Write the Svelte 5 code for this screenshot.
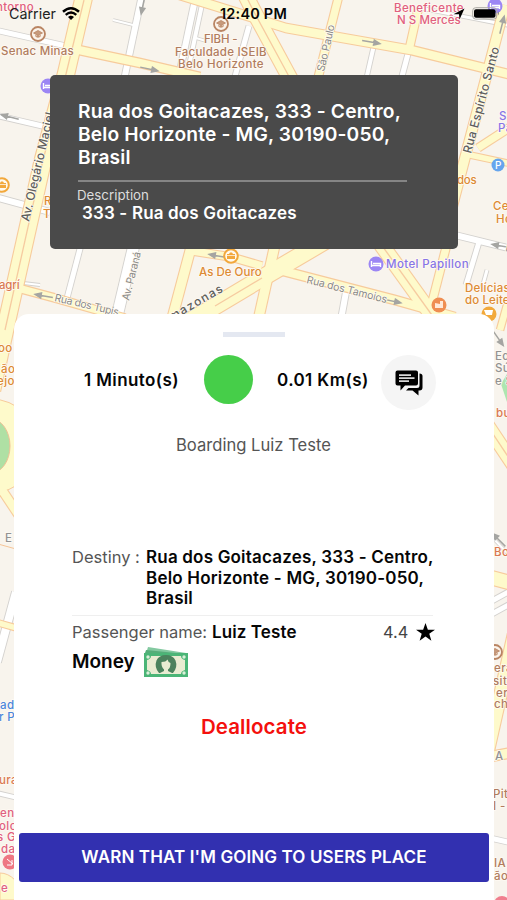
<script>
  const yellowRoads = [
    { d: 'M86 -12L66 74L43 160L5 330L-8 390', w: 17 },
    { d: 'M74 49L140 63L200 77', w: 9 },
    { d: 'M170 -8L254 18L286 28L411 50L520 77', w: 9 },
    { d: 'M240 -16L253 10L292 82', w: 15 },
    { d: 'M339 -5L317 82', w: 8 },
    { d: 'M418 10L409 50', w: 8 },
    { d: 'M505 5L467 150L450 215', w: 10 },
    { d: 'M478 148L512 126', w: 8 },
    { d: 'M470 155L512 164', w: 6 },
    { d: 'M14 287L55 298L125 318', w: 8 },
    { d: 'M193 240L169 330', w: 10 },
    { d: 'M186 250L231 257L262 266', w: 8 },
    { d: 'M165 336L262 278L330 238', w: 17 },
    { d: 'M276 240L256 330', w: 10 },
    { d: 'M268 267L395 300L455 317', w: 9 },
    { d: 'M378 240L434 318', w: 15 },
    { d: 'M448 240L428 318', w: 8 },
    { d: 'M507 305L500 330', w: 7 },
    { d: 'M-6 478L22 520', w: 9 },
    { d: 'M2 487L20 465', w: 7 },
    { d: 'M-5 622L20 629', w: 6 },
    { d: 'M485 422L515 467', w: 14 },
    { d: 'M485 576L515 584', w: 14 },
    { d: 'M515 630L488 750', w: 13 },
    { d: 'M488 757L515 752', w: 10 }
  ];
  const whiteRoads = [
    { d: 'M-5 30L75 48', w: 5 },
    { d: 'M142 -5L124 80', w: 6 },
    { d: 'M196 -5L178 80', w: 6 },
    { d: 'M204 -5L186 80', w: 4 },
    { d: 'M113 20L137 26', w: 2 },
    { d: 'M-5 115L55 129', w: 5 },
    { d: 'M249 26L234 80', w: 5 },
    { d: 'M374 45L366 80', w: 4 },
    { d: 'M409 50L401 80', w: 5 },
    { d: 'M196 38L206 41', w: 2 },
    { d: 'M420 8L512 26', w: 3 },
    { d: 'M-5 197L50 212', w: 6 },
    { d: 'M81 245L66 302', w: 5 },
    { d: 'M134 245L115 325', w: 11 },
    { d: 'M15 282L40 285', w: 2 },
    { d: 'M346 292L340 325', w: 6 },
    { d: 'M455 235L512 249', w: 6 },
    { d: 'M479 242L466 285', w: 5 },
    { d: 'M487 270L482 288', w: 3 },
    { d: 'M16 592L-3 662', w: 8 },
    { d: 'M-3 793L18 798', w: 4 },
    { d: 'M490 602L512 590', w: 5 },
    { d: 'M490 615L512 603', w: 5 },
    { d: 'M490 838L512 843', w: 5 },
    { d: 'M490 535L512 558', w: 2 }
  ];
  const medians = [
    'M84 0L66 74L43 160L5 330',
    'M240 -16L253 10L292 82',
    'M378 240L434 318',
    'M262 278L215 306',
    'M485 422L515 467'
  ];
  const arrows = [
    { x: 149, y: 69, r: 12 },
    { x: 371, y: 42, r: 10 },
    { x: 143, y: 5, r: 102 },
    { x: 10, y: 117, r: 194 },
    { x: 44, y: 296, r: 190 },
    { x: 218, y: 256, r: 190 },
    { x: 392, y: 301, r: 12 },
    { x: 501, y: 246, r: 190 },
    { x: 498, y: 338, r: 55 },
    { x: 502, y: 25, r: 284 },
    { x: 499, y: 540, r: 225 }
  ];
  const labels = [
    { x: -4, y: 11, t: 'ntorno', c: 'pink', l: 38 },
    { x: 1, y: 55, t: 'Senac Minas', c: 'brown', l: 73 },
    { x: 204, y: 43, t: 'FIBH -', c: 'brown', l: 34 },
    { x: 175, y: 56, t: 'Faculdade ISEIB', c: 'brown', l: 92 },
    { x: 178, y: 68, t: 'Belo Horizonte', c: 'brown', l: 86 },
    { x: 394, y: 12, t: 'Beneficente', c: 'pink', l: 70 },
    { x: 397, y: 24, t: 'N S Mercês', c: 'pink', l: 64 },
    { x: 499, y: 120, t: 'S', c: 'purple' },
    { x: 498, y: 132, t: 'Pa', c: 'purple' },
    { x: 457, y: 184, t: 'dos', c: 'orange', l: 20 },
    { x: 493, y: 210, t: 'Ce', c: 'orange' },
    { x: 496, y: 223, t: 'Ho', c: 'orange' },
    { x: 386, y: 268, t: 'Motel Papillon', c: 'purple', l: 83 },
    { x: 465, y: 292, t: 'Delícias', c: 'orange', l: 45 },
    { x: 465, y: 304, t: 'do Leite', c: 'orange', l: 45 },
    { x: 199, y: 276, t: 'As De Ouro', c: 'orange', l: 63 },
    { x: 44, y: 205, t: 'R', c: 'orange' },
    { x: 43, y: 218, t: 'T', c: 'orange' },
    { x: -1, y: 289, t: 'agrí', c: 'rust', l: 21 },
    { x: -2, y: 352, t: 'oo', c: 'orange' },
    { x: 1, y: 373, t: 'ão', c: 'orange' },
    { x: -3, y: 385, t: 'ejo', c: 'orange' },
    { x: 5, y: 542, t: 'E', c: 'gray' },
    { x: 0, y: 709, t: 'ad', c: 'blue' },
    { x: -1, y: 721, t: 'r P', c: 'blue' },
    { x: -1, y: 784, t: 'ura', c: 'rust' },
    { x: 0, y: 817, t: 'en', c: 'pink' },
    { x: -1, y: 830, t: 'olo', c: 'pink' },
    { x: -3, y: 841, t: 's G', c: 'pink' },
    { x: 1, y: 853, t: 'da', c: 'pink' },
    { x: 1, y: 892, t: 'e', c: 'pink' },
    { x: 495, y: 360, t: 'Ed', c: 'gray' },
    { x: 495, y: 372, t: 'Sú', c: 'gray' },
    { x: 495, y: 385, t: 'e S', c: 'gray' },
    { x: 496, y: 417, t: 'bu', c: 'rust' },
    { x: 494, y: 556, t: 'Bo', c: 'rust' },
    { x: 494, y: 672, t: 'era', c: 'brown' },
    { x: 493, y: 685, t: 'sit', c: 'brown' },
    { x: 496, y: 697, t: 'er', c: 'brown' },
    { x: 494, y: 708, t: 'ch', c: 'brown' },
    { x: 495, y: 760, t: 'A', c: 'gray' },
    { x: 493, y: 798, t: 'Pit', c: 'brown' },
    { x: 493, y: 810, t: 'I -', c: 'brown' },
    { x: 494, y: 867, t: 'IA', c: 'brown' },
    { x: 494, y: 880, t: 'ão', c: 'brown' }
  ];
  const streets = [
    { x: 29, y: 222, r: -77, t: 'Av. Olegário Maciel', l: 112, c: 'dark' },
    { x: 471, y: 154, r: -75, t: 'Rua Espírito Santo', l: 110, c: 'dark' },
    { x: 324, y: 72, r: -77, t: 'São Paulo', l: 48, c: 'street' },
    { x: 129, y: 301, r: -76, t: 'Av. Paraná', l: 50, c: 'street' },
    { x: 54, y: 301, r: 13, t: 'Rua dos Tupis', l: 66, c: 'street' },
    { x: 306, y: 283, r: 14, t: 'Rua dos Tamoios', l: 83, c: 'street' },
    { x: 172, y: 321, r: -30, t: 'mazonas', l: 60, c: 'dark' },
    { x: 505, y: 251, r: 12, t: 'R', l: 7, c: 'street' }
  ];
</script>

<main>
  <svg class="map" viewBox="0 0 507 900" width="507" height="900" aria-hidden="true">
    <rect width="507" height="900" fill="#f8f4ed" />
    {#each whiteRoads as r}<path class="line" d={r.d} stroke="#d3d1ce" stroke-width={r.w + 1.8} />{/each}
    {#each whiteRoads as r}<path class="line" d={r.d} stroke="#fff" stroke-width={r.w} />{/each}
    {#each yellowRoads as r}<path class="line" d={r.d} stroke="#f7cb9c" stroke-width={r.w + 1.6} />{/each}
    <circle cx="-9" cy="446" r="47" fill="#fefacb" stroke="#f7cb9c" />
    {#each yellowRoads as r}<path class="line" d={r.d} stroke="#fefacb" stroke-width={r.w - 0.6} />{/each}
    {#each medians as d}<path class="line" {d} stroke="#f6cba0" stroke-width="1.3" />{/each}
    <ellipse cx="-9" cy="446" rx="19" ry="27" fill="#afe0a4" stroke="#efc195" />
    <path d="M-2 544L16 549" stroke="#f5c497" />
    <path d="M0 873Q8 873 15 880V900H0Z" fill="#fefacb" stroke="#f7cb9c" />
    <path d="M501 384L507 374V402Z" fill="#ade6b0" />

    {#each arrows as a}
      <path transform="translate({a.x} {a.y}) rotate({a.r})" d="M-9 0H6M3 -2.5L9 0L3 2.5Z" fill="#a5a5a2" stroke="#a5a5a2" stroke-width="1.5" />
    {/each}
    {#each streets as s}
      <text class={s.c} transform="translate({s.x} {s.y}) rotate({s.r})" textLength={s.l}>{s.t}</text>
    {/each}
    {#each labels as p}
      <text class={p.c} x={p.x} y={p.y} textLength={p.l}>{p.t}</text>
    {/each}

    {#each [[38, 34], [221, 24], [495, 652]] as [x, y]}
      <g transform="translate({x} {y})">
        <circle r="7" fill="#fbf3ea" stroke="#b98462" stroke-width="1.8" />
        <path d="M-4.5 -1L0 -3.5L4.5 -1L0 1.5ZM-3 1.5Q0 5 3 1.5" fill="#c79a7c" stroke="#b98462" stroke-width=".8" />
      </g>
    {/each}
    {#each [[48, 86], [376, 264], [495, 6]] as [x, y]}
      <g transform="translate({x} {y})">
        <circle r="7.5" fill="#9c86f4" />
        <path d="M-4.5 -3V3M-4.5 1.5H4.5V3M-3 -.5H4.5V1.5" fill="none" stroke="#fff" stroke-width="1.4" />
      </g>
    {/each}
    {#each [[231, 256], [2, 185]] as [x, y]}
      <g transform="translate({x} {y})">
        <circle r="6.8" fill="#fffaf0" stroke="#f2a83c" stroke-width="2" />
        <path d="M-4 0H4V3H-4ZM-4 -.8V-2H-2L-1 -3.500H1L2 -2H4V-.8Z" fill="#f2a83c" />
      </g>
    {/each}
    <circle cx="439" cy="305" r="7.5" fill="#ef8e52" />
    <path d="M435 303V308H443V301H440V304Z" fill="#ffe9d8" />
    <circle cx="489" cy="314" r="7.5" fill="#f2a93b" />
    <path d="M484 310H493L492 315H486Z" fill="#fff" />
    <circle cx="498" cy="165" r="6.5" fill="#66a5ed" />
    <text x="495" y="168.5" class="pin">P</text>
    <circle cx="10" cy="862" r="7.5" fill="#ee7783" />
    <path d="M7 859L13 864M7 865H12V860" stroke="#fff" fill="none" />
    <circle cx="502" cy="904" r="8" fill="#f07f8e" />
  </svg>

  <header class="status">
    <span class="carrier">Carrier</span>
    <svg class="wifi" viewBox="0 0 18 13" width="18" height="13">
      <path d="M1 4.8Q9 -2.2 17 4.8" fill="none" stroke="#000" stroke-width="2.5" />
      <path d="M3.7 7.8Q9 3.2 14.3 7.8" fill="none" stroke="#000" stroke-width="2.3" />
      <path d="M6 10Q9 7.4 12 10L9 13Z" />
    </svg>
    <b class="clock">12:40 PM</b>
    <svg class="loc" viewBox="0 0 12 12" width="12" height="12"><path d="M0.5 6.3L11.5 .5L6.5 11.5L6 6.3Z" /></svg>
    <svg class="battery" viewBox="0 0 28 13" width="28" height="13">
      <rect x=".7" y=".7" width="24" height="11.4" rx="3" fill="none" stroke="#aaa8a2" />
      <rect x="2" y="2.2" width="21.5" height="8.6" rx="2" />
      <path d="M26 4.3Q28 6.3 26 8.5Z" fill="#888" />
    </svg>
  </header>

  <section class="address">
    <h1>Rua dos Goitacazes, 333 - Centro,<br />Belo Horizonte - MG, 30190-050,<br />Brasil</h1>
    <hr />
    <span class="caption">Description</span>
    <strong>333 - Rua dos Goitacazes</strong>
  </section>

  <section class="sheet">
    <div class="handle"></div>
    <div class="trip">
      <b class="time">1 Minuto(s)</b>
      <span class="dot"></span>
      <b class="dist">0.01 Km(s)</b>
      <button class="chat" aria-label="Chat">
        <svg viewBox="0 0 28 26" width="28" height="26">
          <path d="M2.500 .5H21Q23 .5 23 2.500V13.500Q23 15.500 21 15.500H10L5.500 20.500V15.500H2.500Q.5 15.500 .5 13.500V2.500Q.5 .5 2.500 .5Z" />
          <path d="M24.500 3.500Q27.500 3.700 27.500 6V17.500Q27.500 20.500 24.500 20.500H23.500V25.500L17.500 20.500H11L13.500 18H22Q24.500 18 24.500 15.500Z" />
          <path d="M4 5.200H16M4 8.200H19.500M4 11.200H14" stroke="#d8d8d8" stroke-width="1.700" />
        </svg>
      </button>
    </div>
    <p class="boarding">Boarding Luiz Teste</p>
    <div class="destiny">
      <span>Destiny :</span>
      <b>Rua dos Goitacazes, 333 - Centro,<br />Belo Horizonte - MG, 30190-050,<br />Brasil</b>
    </div>
    <div class="passenger">
      <span class="key">Passenger name:</span>
      <b>Luiz Teste</b>
      <span class="rate">4.4</span>
      <svg viewBox="0 0 20 19" width="19" height="18"><path d="M10 0L12.500 7H20L14 11.400L16.200 18.700L10 14.300L3.800 18.700L6 11.400L0 7H7.500Z" /></svg>
    </div>
    <div class="payment">
      <b>Money</b>
      <svg viewBox="0 0 44 31" width="44" height="31">
        <path d="M4 0L42 6V10H1Z" fill="#83c9a0" />
        <path d="M2 3L32 6H1Z" fill="#55ae79" />
        <rect y="6" width="44" height="24" fill="#4bb577" />
        <path d="M7 9H37Q37 12 41 13V23Q37 24 37 27H7Q7 24 3 23V13Q7 12 7 9Z" fill="#e9ecd2" />
        <g fill="#dcefd9"><circle cx="4" cy="10" r="1.700" /><circle cx="40" cy="10" r="1.700" /><circle cx="4" cy="26" r="1.700" /><circle cx="40" cy="26" r="1.700" /></g>
        <path d="M15 26Q10 20 12.500 13.500Q15 8 22 8Q29 8 31.500 13.500Q34 20 29 26H24V22H20V26Z" fill="#4b825d" />
        <path d="M17.500 15Q22 15 23.500 12.500Q24 15 26.500 16Q26.500 21 24 22.500V24L28 26V27H16V26L20 24V22.500Q17 20 17.500 15Z" fill="#e9ecd2" />
      </svg>
    </div>
    <button class="cancel">Deallocate</button>
    <button class="warn">WARN THAT I'M GOING TO USERS PLACE</button>
  </section>
</main>

<style>
  :global(body) { margin: 0; }
  main {
    position: relative;
    box-sizing: border-box;
    width: 507px;
    height: 900px;
    overflow: hidden;
    display: flex;
    flex-direction: column;
    font-family: Inter, "Liberation Sans", sans-serif;
    color: #060606;
    white-space: nowrap;
  }
  .map { position: absolute; inset: 0; }
  .line { fill: none; stroke-linejoin: round; }
  .map text { font-size: 11.500px; font-weight: 500; letter-spacing: .4px; paint-order: stroke; stroke: #fffaf3; stroke-width: 1.500px; }
  .map .pink { fill: #e0607f; }
  .map .brown { fill: #b07c5e; }
  .map .purple { fill: #8775e6; }
  .map .orange { fill: #dc8a34; }
  .map .rust { fill: #d97850; }
  .map .blue { fill: #4b86dc; }
  .map .gray { fill: #929292; }
  .map .street { fill: #8b8b88; font-size: 10.500px; font-weight: 400; }
  .map .dark { fill: #60605c; font-size: 12px; }
  .map .pin { fill: #fff; stroke: none; font-size: 10px; }
  .status { position: relative; height: 27px; flex: none; display: flex; align-items: center; padding-left: 9px; }
  .carrier { width: 53px; font-size: 14.300px; color: #222; }
  .wifi { margin-top: -1px; }
  .clock { width: 69px; margin-left: 140px; font-size: 14.500px; letter-spacing: .2px; }
  .loc { margin-left: 164px; }
  .battery { margin-left: 7px; margin-top: -1px; }
  .address {
    position: relative;
    box-sizing: border-box;
    width: 408px;
    height: 174px;
    flex: none;
    margin: 47.500px 0 0 50px;
    padding: 25px 28px;
    border-radius: 5px;
    background: #4a4a4a;
    color: #fff;
    display: flex;
    flex-direction: column;
  }
  h1 { margin: 0; font-size: 19.200px; line-height: 23.300px; font-weight: 600; letter-spacing: .16px; }
  hr { width: 329px; height: 1.500px; margin: 11px 0 0; border: 0; background: #858585; }
  .caption { margin: 4px 0 0 -1px; font-size: 13.300px; line-height: 18px; color: #dcdcdc; }
  .address strong { margin-left: 4px; font-size: 17px; line-height: 19px; font-weight: 600; letter-spacing: .16px; }
  .sheet {
    position: relative;
    box-sizing: border-box;
    width: 480px;
    height: 586px;
    flex: none;
    margin: 65.500px 0 0 14px;
    border-radius: 15px 15px 0 0;
    background: #fff;
    display: flex;
    flex-direction: column;
  }
  b { font-weight: 600; }
  .handle { width: 62px; height: 5px; margin: 18px 0 0 209px; background: #e4e8f1; }
  .trip { display: flex; align-items: center; height: 55px; margin: 18px 0 0 70px; font-size: 17px; letter-spacing: .4px; }
  .trip b { margin-top: -6px; }
  .time { width: 120px; }
  .dot { width: 49px; height: 49px; margin-top: -6px; border-radius: 50%; background: #46ce49; }
  .dist { width: 104px; margin-left: 24px; }
  button { padding: 0; border: 0; font-family: inherit; font-weight: 600; }
  .chat { width: 55px; height: 55px; border-radius: 50%; background: #f5f5f5; display: grid; place-items: center; }
  .boarding { margin: 25px 0 0 162px; font-size: 16.600px; line-height: 20px; color: #555; }
  .destiny { display: flex; box-sizing: border-box; width: 361px; height: 69px; margin: 92px 0 0 58px; border-bottom: 1.500px solid #efefef; font-size: 17px; line-height: 20.500px; letter-spacing: .19px; }
  .destiny span { width: 74px; flex: none; color: #555; font-size: 16.500px; letter-spacing: 0; }
  .passenger { display: flex; align-items: center; height: 31px; margin-left: 58px; font-size: 17px; }
  .passenger .key { width: 140px; color: #555; font-size: 16.500px; }
  .passenger b { width: 171px; letter-spacing: .1px; }
  .rate { width: 33px; color: #444; font-size: 16.300px; }
  .payment { display: flex; align-items: center; height: 30px; margin-left: 58px; font-size: 19px; }
  .payment b { width: 72px; margin-top: -2px; }
  .cancel { align-self: center; margin-top: 36px; background: none; color: #f4100d; font-size: 20.500px; line-height: 28px; letter-spacing: .1px; }
  .warn { box-sizing: border-box; width: 470px; height: 49px; margin: 92px 0 0 5px; padding-bottom: 2px; border-radius: 3px; background: #3230b0; color: #fff; font-size: 17px; letter-spacing: .12px; }
</style>
